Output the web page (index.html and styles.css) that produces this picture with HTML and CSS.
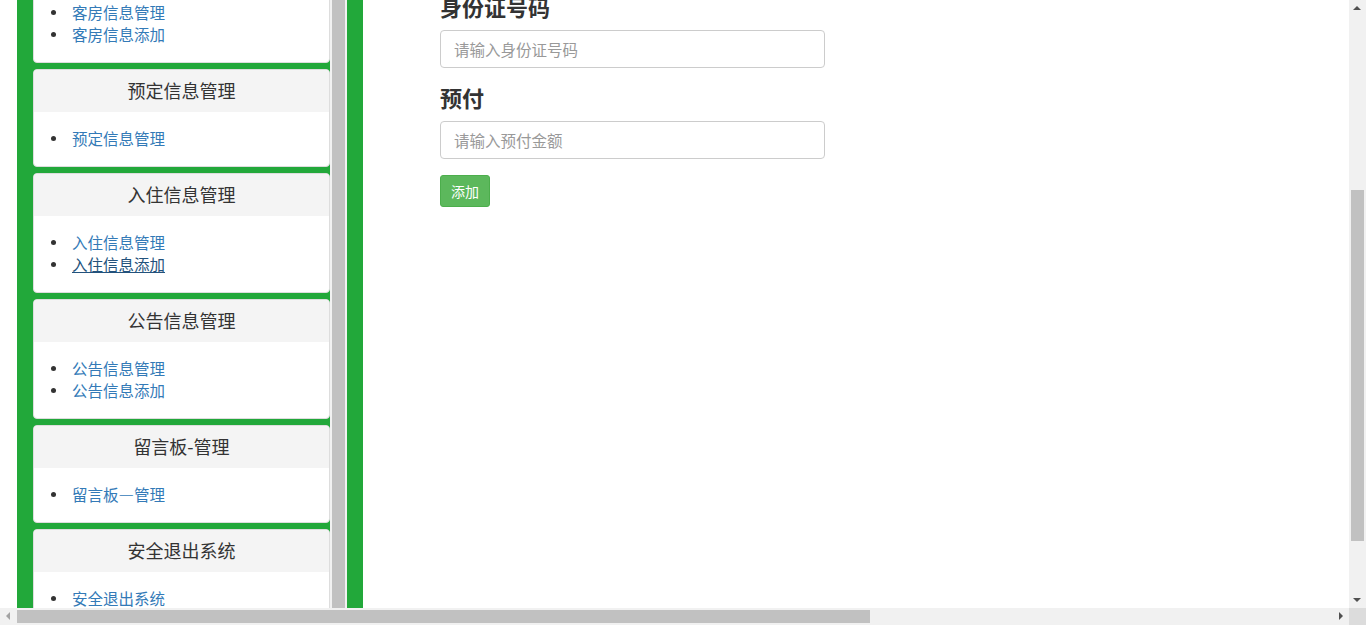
FILE: index.html
```html
<!DOCTYPE html>
<html lang="zh-CN">
<head>
<meta charset="utf-8">
<title>入住信息添加</title>
<link rel="stylesheet" href="styles.css">
</head>
<body>
<div class="page">
  <aside class="sidebar">
    <div class="panels">
      <div class="panel">
        <div class="panel-heading">管理员信息</div>
        <div class="panel-body"><ul><li><a href="#">修改密码</a></li></ul></div>
      </div>
      <div class="panel">
        <div class="panel-heading">用户信息管理</div>
        <div class="panel-body"><ul><li><a href="#">用户信息管理</a></li><li><a href="#">用户信息添加</a></li></ul></div>
      </div>
      <div class="panel">
        <div class="panel-heading">客房信息管理</div>
        <div class="panel-body"><ul><li><a href="#">客房信息管理</a></li><li><a href="#">客房信息添加</a></li></ul></div>
      </div>
      <div class="panel">
        <div class="panel-heading">预定信息管理</div>
        <div class="panel-body"><ul><li><a href="#">预定信息管理</a></li></ul></div>
      </div>
      <div class="panel">
        <div class="panel-heading">入住信息管理</div>
        <div class="panel-body"><ul><li><a href="#">入住信息管理</a></li><li><a href="#" class="active">入住信息添加</a></li></ul></div>
      </div>
      <div class="panel">
        <div class="panel-heading">公告信息管理</div>
        <div class="panel-body"><ul><li><a href="#">公告信息管理</a></li><li><a href="#">公告信息添加</a></li></ul></div>
      </div>
      <div class="panel">
        <div class="panel-heading">留言板-管理</div>
        <div class="panel-body"><ul><li><a href="#">留言板—管理</a></li></ul></div>
      </div>
      <div class="panel">
        <div class="panel-heading">安全退出系统</div>
        <div class="panel-body"><ul><li><a href="#">安全退出系统</a></li></ul></div>
      </div>
    </div>
    <div class="side-scroll"><div class="side-thumb"></div></div>
  </aside>
  <main class="main">
    <form class="form">
      <div class="field">
        <label class="label">客户姓名</label>
        <input class="input" type="text" placeholder="请输入客户姓名">
      </div>
      <div class="field">
        <label class="label">房间号</label>
        <input class="input" type="text" placeholder="请输入房间号">
      </div>
      <div class="field">
        <label class="label">入住时间</label>
        <input class="input" type="text" placeholder="请输入入住时间">
      </div>
      <div class="field">
        <label class="label">身份证号码</label>
        <input class="input" type="text" placeholder="请输入身份证号码">
      </div>
      <div class="field">
        <label class="label">预付</label>
        <input class="input" type="text" placeholder="请输入预付金额">
      </div>
      <button class="btn" type="button">添加</button>
    </form>
  </main>
</div>

<div class="vscroll">
  <div class="arrow arrow-up"></div>
  <div class="vthumb"></div>
  <div class="arrow arrow-down"></div>
</div>
<div class="hscroll">
  <div class="arrow arrow-left"></div>
  <div class="hthumb"></div>
  <div class="arrow arrow-right"></div>
</div>
<div class="corner"></div>

<script src="script.js"></script>
</body>
</html>
```

FILE: styles.css
```css
html, body {
  margin: 0;
  padding: 0;
}
body {
  font-family: "Noto Sans CJK SC", "Liberation Sans", sans-serif;
  font-size: 14px;
  color: #333;
  background: #fff;
}
.page {
  display: flex;
  box-sizing: border-box;
  width: 2080px;
  padding-left: 17px;
}
.sidebar {
  display: flex;
  width: 346px;
  box-sizing: border-box;
  height: 994px;
  padding: 0 16px;
  background: #22a83a;
}
.panels {
  width: 297px;
  padding-top: 13px;
  display: flex;
  flex-direction: column;
  gap: 6px;
}
.panel {
  background: #fff;
  border: 1px solid #ddd;
  border-radius: 4px;
  overflow: hidden;
}
.panel-heading {
  height: 42px;
  line-height: 40px;
  text-align: center;
  font-size: 18px;
  background: #f4f4f4;
  color: #333;
}
.panel-body {
  padding: 15px 15px 17px 0;
}
.panel-body ul {
  margin: 0;
  padding-left: 38px;
  list-style: none;
}
.panel-body li {
  position: relative;
  line-height: 22px;
  font-size: 15.5px;
}
.panel-body li::before {
  content: "";
  position: absolute;
  left: -21px;
  top: 9px;
  width: 5px;
  height: 5px;
  border-radius: 50%;
  background: #333;
}
.panel-body a {
  color: #337ab7;
  text-decoration: none;
}
.panel-body a.active {
  color: #23527c;
  text-decoration: underline;
}
.side-scroll {
  width: 17px;
  background: #f1f1f1;
  display: flex;
  justify-content: center;
}
.side-thumb {
  width: 13px;
  background: #c1c1c1;
}
.main {
  flex: 1;
  padding: 4px 0 0 77px;
}
.form {
  width: 385px;
}
.field {
  padding-top: 19px;
}
.label {
  display: block;
  font-size: 22px;
  font-weight: bold;
  line-height: 20px;
  margin-bottom: 14px;
  color: #333;
}
.input {
  display: block;
  box-sizing: border-box;
  width: 385px;
  height: 38px;
  padding: 0 13px;
  border: 1px solid #ccc;
  border-radius: 4px;
  font-family: inherit;
  font-size: 15.5px;
  color: #555;
  outline: none;
}
.input::placeholder {
  color: #999;
}
.btn {
  margin-top: 16px;
  height: 32px;
  padding: 0 10px;
  background: #5cb85c;
  border: 1px solid #4cae4c;
  border-radius: 3px;
  color: #fff;
  font-family: inherit;
  font-size: 14px;
  line-height: 30px;
}

/* window scrollbars */
.vscroll {
  position: fixed;
  top: 0;
  right: 0;
  width: 17px;
  height: 608px;
  background: #f1f1f1;
}
.vthumb {
  position: absolute;
  left: 2px;
  top: 190px;
  width: 13px;
  height: 351px;
  background: #c1c1c1;
}
.hscroll {
  position: fixed;
  left: 0;
  bottom: 0;
  width: 1349px;
  height: 17px;
  background: #f1f1f1;
}
.hthumb {
  position: absolute;
  left: 17px;
  top: 2px;
  width: 853px;
  height: 13px;
  background: #c1c1c1;
}
.corner {
  position: fixed;
  right: 0;
  bottom: 0;
  width: 17px;
  height: 17px;
  background: #dcdcdc;
}
.arrow {
  position: absolute;
  width: 0;
  height: 0;
}
.arrow-up {
  left: 4px;
  top: 6px;
  border-left: 4px solid transparent;
  border-right: 4px solid transparent;
  border-bottom: 4px solid #505050;
}
.arrow-down {
  left: 4px;
  bottom: 6px;
  border-left: 4px solid transparent;
  border-right: 4px solid transparent;
  border-top: 4px solid #505050;
}
.arrow-left {
  left: 6px;
  top: 4px;
  border-top: 4px solid transparent;
  border-bottom: 4px solid transparent;
  border-right: 4px solid #a3a3a3;
}
.arrow-right {
  right: 6px;
  top: 4px;
  border-top: 4px solid transparent;
  border-bottom: 4px solid transparent;
  border-left: 4px solid #505050;
}
```

FILE: script.js
```js
window.scrollTo(0, 300);
```
